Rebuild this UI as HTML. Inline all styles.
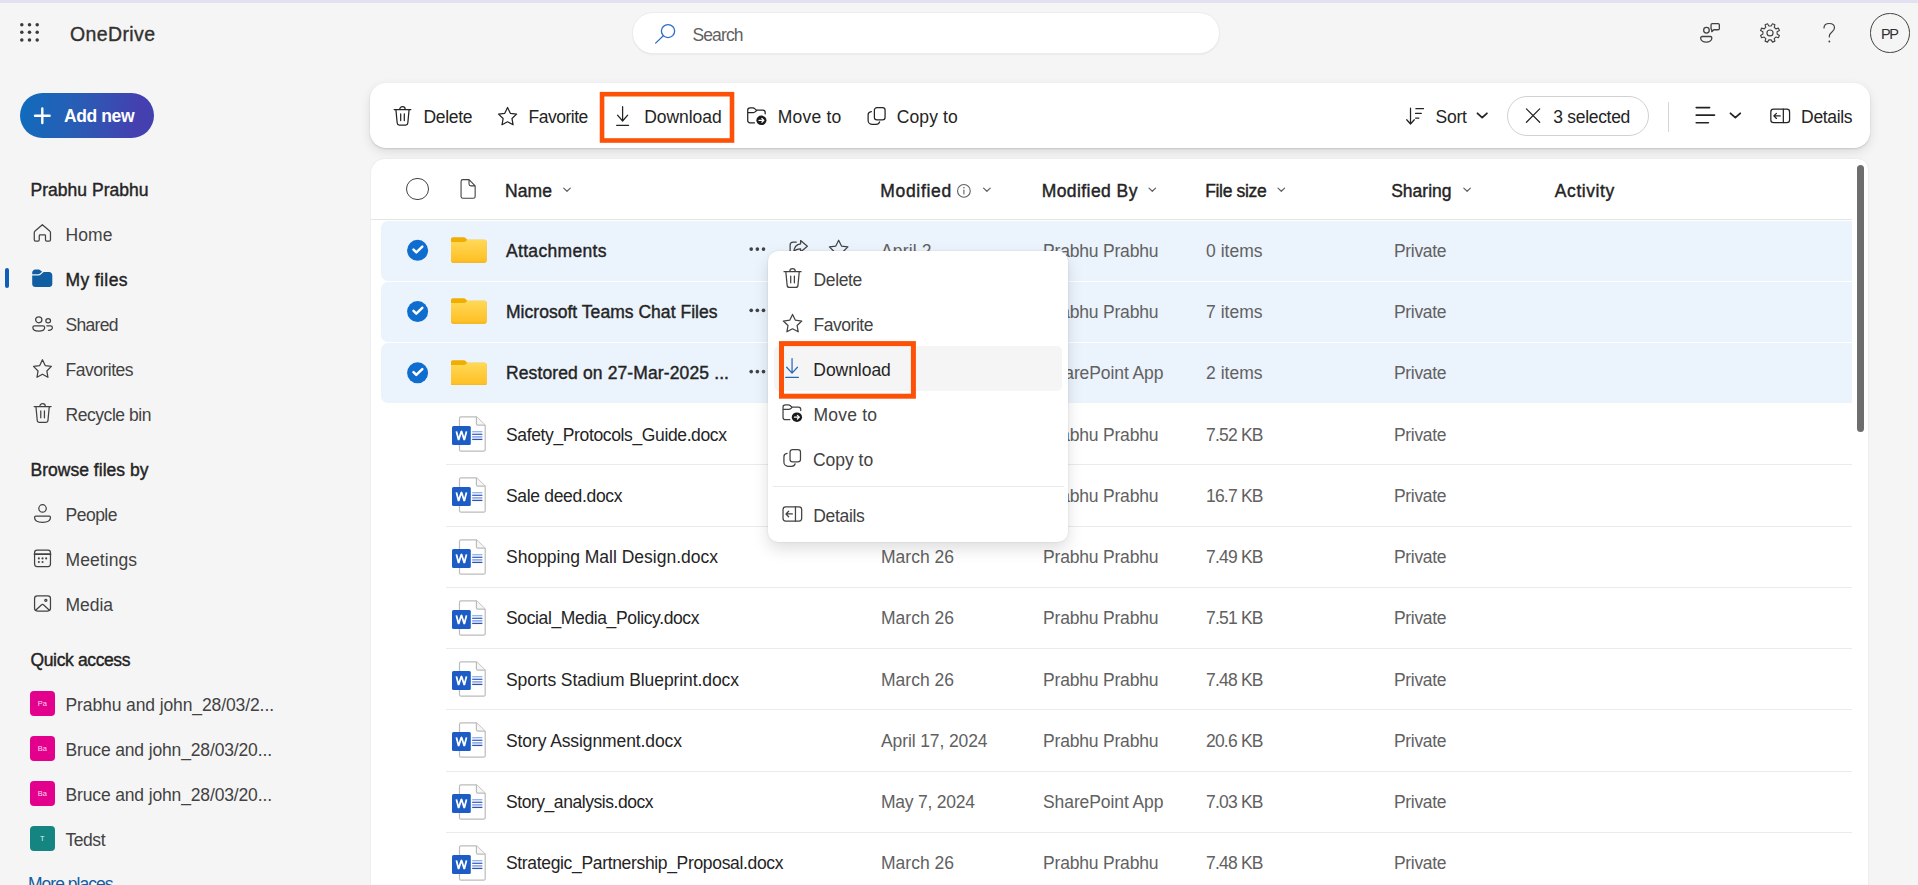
<!DOCTYPE html>
<html lang="en"><head><meta charset="utf-8"><title>My files - OneDrive</title><style>
html,body{margin:0;padding:0;}
body{width:1918px;height:885px;overflow:hidden;background:#f5f5f5;position:relative;font-family:"Liberation Sans", sans-serif;}
.t{position:absolute;white-space:nowrap;line-height:30px;height:30px;}
</style></head>
<body>
<div style="position:absolute;left:0px;top:0px;width:1918px;height:2.5px;background:#e3e1f1;"></div>
<svg style="position:absolute;left:19.8px;top:23.3px;" width="19" height="19" viewBox="0 0 19 19" fill="none"><circle cx="1.80" cy="1.80" r="1.750" fill="#3b3a39"/><circle cx="1.80" cy="9.35" r="1.750" fill="#3b3a39"/><circle cx="1.80" cy="16.90" r="1.750" fill="#3b3a39"/><circle cx="9.50" cy="1.80" r="1.750" fill="#3b3a39"/><circle cx="9.50" cy="9.35" r="1.750" fill="#3b3a39"/><circle cx="9.50" cy="16.90" r="1.750" fill="#3b3a39"/><circle cx="17.20" cy="1.80" r="1.750" fill="#3b3a39"/><circle cx="17.20" cy="9.35" r="1.750" fill="#3b3a39"/><circle cx="17.20" cy="16.90" r="1.750" fill="#3b3a39"/></svg>
<span class="t" id="t1" style="left:70px;top:18.50px;font-size:19.5px;color:#323130;-webkit-text-stroke:0.35px #323130;letter-spacing:0.375px;">OneDrive</span>
<div style="position:absolute;left:20px;top:93px;width:134px;height:45px;border-radius:23px;background:linear-gradient(100deg,#0f6cbd 0%,#2a5cb4 45%,#4440b0 85%,#4340ae 100%);"></div>
<svg style="position:absolute;left:0;top:0;overflow:visible" width="1" height="1"><g transform="translate(33.54 106.94) scale(0.9733 0.9733)"><path d="M9 1.500v15M1.500 9h15" stroke="#ffffff" stroke-width="2.4" vector-effect="non-scaling-stroke" fill="none" stroke-linecap="round" stroke-linejoin="round"/></g></svg>
<span class="t" id="t2" style="left:64px;top:101.00px;font-size:17.5px;color:#ffffff;font-weight:700;letter-spacing:-0.404px;">Add new</span>
<span class="t" id="t3" style="left:30.5px;top:174.50px;font-size:17.5px;color:#242424;-webkit-text-stroke:0.4px #242424;letter-spacing:0.022px;">Prabhu Prabhu</span>
<svg style="position:absolute;left:0;top:0;overflow:visible" width="1" height="1"><g transform="translate(29.91 220.64) scale(1.2462 1.2386)"><path d="M10 3.300 4.100 8.400c-.4.300-.6.800-.6 1.300v5.800c0 .6.400 1 1 1h2c.6 0 1-.4 1-1v-3.300c0-.4.300-.7.700-.7h3.600c.4 0 .7.300.7.700v3.300c0 .6.400 1 1 1h2c.6 0 1-.4 1-1V9.700c0-.5-.2-1-.6-1.300L10 3.300Z" stroke="#424242" stroke-width="1.25" vector-effect="non-scaling-stroke" fill="none" stroke-linecap="round" stroke-linejoin="round"/></g></svg>
<svg style="position:absolute;left:0;top:0;overflow:visible" width="1" height="1"><g transform="translate(29.69 265.87) scale(1.2562 1.2429)"><path d="M2 5.500C2 4.120 3.120 3 4.500 3h2.670c.46 0 .9.160 1.250.450L9.900 4.700 7.970 6.300a1.500 1.500 0 0 1-.960.350H2V5.500Zm0 2.150v6.850C2 15.880 3.120 17 4.500 17h11c1.380 0 2.500-1.120 2.500-2.500v-7C18 6.120 16.880 5 15.500 5h-4.390L8.600 7.070c-.45.370-1.010.580-1.600.580H2Z" fill="#115ea3"/></g></svg>
<svg style="position:absolute;left:0;top:0;overflow:visible" width="1" height="1"><g transform="translate(30.96 313.14) scale(1.1637 1.0802)"><circle cx="6.700" cy="6.200" r="2.700" stroke="#424242" stroke-width="1.25" vector-effect="non-scaling-stroke" fill="none" stroke-linecap="round" stroke-linejoin="round"/><path d="M1.600 13.300c0-.9.700-1.600 1.600-1.600h7c.9 0 1.600.7 1.600 1.600 0 2.100-2 3.300-5.100 3.300s-5.100-1.200-5.100-3.300Z" stroke="#424242" stroke-width="1.25" vector-effect="non-scaling-stroke" fill="none" stroke-linecap="round" stroke-linejoin="round"/><circle cx="14.800" cy="7.100" r="2" stroke="#424242" stroke-width="1.25" vector-effect="non-scaling-stroke" fill="none" stroke-linecap="round" stroke-linejoin="round"/><path d="M13.600 11.700h3.300c.9 0 1.500.7 1.500 1.500 0 1.600-1.200 2.600-3.400 2.700" stroke="#424242" stroke-width="1.25" vector-effect="non-scaling-stroke" fill="none" stroke-linecap="round" stroke-linejoin="round"/></g></svg>
<svg style="position:absolute;left:0;top:0;overflow:visible" width="1" height="1"><g transform="translate(30.55 356.92) scale(1.1900 1.2187)"><path d="M10 2.300l2.300 4.800 5.200.7-3.800 3.700.9 5.200L10 14.200l-4.600 2.500.9-5.200L2.500 7.800l5.200-.7L10 2.300Z" stroke="#424242" stroke-width="1.25" vector-effect="non-scaling-stroke" fill="none" stroke-linecap="round" stroke-linejoin="round"/></g></svg>
<svg style="position:absolute;left:0;top:0;overflow:visible" width="1" height="1"><g transform="translate(31.15 400.97) scale(1.1453 1.2161)"><path d="M2.600 4.600h14.800M7.600 4.400c0-1.300 1.100-2.300 2.400-2.300s2.400 1 2.400 2.300M4.200 4.800l1.100 11.100c.1 1 .9 1.700 1.900 1.700h5.600c1 0 1.800-.7 1.900-1.700l1.100-11.100M8.400 8.200v5.600M11.600 8.200v5.600" stroke="#424242" stroke-width="1.25" vector-effect="non-scaling-stroke" fill="none" stroke-linecap="round" stroke-linejoin="round"/></g></svg>
<svg style="position:absolute;left:0;top:0;overflow:visible" width="1" height="1"><g transform="translate(30.10 500.99) scale(1.2422 1.2447)"><circle cx="10" cy="6" r="3" stroke="#424242" stroke-width="1.25" vector-effect="non-scaling-stroke" fill="none" stroke-linecap="round" stroke-linejoin="round"/><path d="M3.600 13.250c0-.55.450-1 1-1h10.800c.55 0 1 .450 1 1 0 2.400-2.700 3.850-6.400 3.850s-6.400-1.450-6.400-3.850Z" stroke="#424242" stroke-width="1.25" vector-effect="non-scaling-stroke" fill="none" stroke-linecap="round" stroke-linejoin="round"/></g></svg>
<svg style="position:absolute;left:0;top:0;overflow:visible" width="1" height="1"><g transform="translate(30.29 545.82) scale(1.2231 1.2577)"><rect x="3.500" y="3.500" width="13" height="13" rx="2" stroke="#424242" stroke-width="1.25" vector-effect="non-scaling-stroke" fill="none" stroke-linecap="round" stroke-linejoin="round"/><path d="M3.500 6.700h13" stroke="#424242" stroke-width="1.75" vector-effect="non-scaling-stroke" fill="none" stroke-linecap="round" stroke-linejoin="round"/><circle cx="7" cy="10" r=".85" fill="#424242"/><circle cx="10" cy="10" r=".85" fill="#424242"/><circle cx="13" cy="10" r=".85" fill="#424242"/><circle cx="7" cy="12.900" r=".85" fill="#424242"/><circle cx="10" cy="12.900" r=".85" fill="#424242"/></g></svg>
<svg style="position:absolute;left:0;top:0;overflow:visible" width="1" height="1"><g transform="translate(30.29 591.66) scale(1.2231 1.1769)"><rect x="3.500" y="3.500" width="13" height="13" rx="2.300" stroke="#424242" stroke-width="1.25" vector-effect="non-scaling-stroke" fill="none" stroke-linecap="round" stroke-linejoin="round"/><circle cx="12.700" cy="7.400" r=".9" stroke="#424242" stroke-width="1.25" vector-effect="non-scaling-stroke" fill="none" stroke-linecap="round" stroke-linejoin="round"/><path d="M4.400 15.800l4.600-4.500c.6-.55 1.400-.55 2 0l4.600 4.500" stroke="#424242" stroke-width="1.25" vector-effect="non-scaling-stroke" fill="none" stroke-linecap="round" stroke-linejoin="round"/></g></svg>
<span class="t" id="t4" style="left:65.5px;top:219.50px;font-size:17.5px;color:#424242;letter-spacing:0.104px;">Home</span>
<span class="t" id="t5" style="left:65.5px;top:264.50px;font-size:17.5px;color:#242424;-webkit-text-stroke:0.4px #242424;letter-spacing:0.384px;">My files</span>
<span class="t" id="t6" style="left:65.5px;top:309.50px;font-size:17.5px;color:#424242;letter-spacing:-0.688px;">Shared</span>
<span class="t" id="t7" style="left:65.5px;top:354.50px;font-size:17.5px;color:#424242;letter-spacing:-0.496px;">Favorites</span>
<span class="t" id="t8" style="left:65.5px;top:399.50px;font-size:17.5px;color:#424242;letter-spacing:-0.447px;">Recycle bin</span>
<span class="t" id="t9" style="left:65.5px;top:500.00px;font-size:17.5px;color:#424242;letter-spacing:-0.500px;">People</span>
<span class="t" id="t10" style="left:65.5px;top:545.00px;font-size:17.5px;color:#424242;letter-spacing:0.069px;">Meetings</span>
<span class="t" id="t11" style="left:65.5px;top:589.50px;font-size:17.5px;color:#424242;letter-spacing:-0.043px;">Media</span>
<div style="position:absolute;left:5px;top:268px;width:4px;height:20px;background:#0f5fb8;border-radius:2px;"></div>
<span class="t" id="t12" style="left:30.5px;top:455.00px;font-size:17.5px;color:#242424;-webkit-text-stroke:0.4px #242424;letter-spacing:0.022px;">Browse files by</span>
<span class="t" id="t13" style="left:30.5px;top:644.50px;font-size:17.5px;color:#242424;-webkit-text-stroke:0.4px #242424;letter-spacing:-0.369px;">Quick access</span>
<div style="position:absolute;left:30px;top:691.0px;width:24.5px;height:24.5px;background:#e3008c;border-radius:4px;"></div>
<span class="t" id="t14" style="left:30px;top:689.20px;font-size:7.5px;color:#ffd6ee;width:24.5px;text-align:center;">Pa</span>
<span class="t" id="t15" style="left:65.5px;top:689.50px;font-size:17.5px;color:#424242;letter-spacing:-0.106px;">Prabhu and john_28/03/2...</span>
<div style="position:absolute;left:30px;top:736.0px;width:24.5px;height:24.5px;background:#e3008c;border-radius:4px;"></div>
<span class="t" id="t16" style="left:30px;top:734.20px;font-size:7.5px;color:#ffd6ee;width:24.5px;text-align:center;">Ba</span>
<span class="t" id="t17" style="left:65.5px;top:734.50px;font-size:17.5px;color:#424242;letter-spacing:-0.147px;">Bruce and john_28/03/20...</span>
<div style="position:absolute;left:30px;top:781.0px;width:24.5px;height:24.5px;background:#e3008c;border-radius:4px;"></div>
<span class="t" id="t18" style="left:30px;top:779.20px;font-size:7.5px;color:#ffd6ee;width:24.5px;text-align:center;">Ba</span>
<span class="t" id="t19" style="left:65.5px;top:779.50px;font-size:17.5px;color:#424242;letter-spacing:-0.147px;">Bruce and john_28/03/20...</span>
<div style="position:absolute;left:30px;top:826.0px;width:24.5px;height:24.5px;background:#158582;border-radius:4px;"></div>
<span class="t" id="t20" style="left:30px;top:824.20px;font-size:7.5px;color:#d9f2f0;width:24.5px;text-align:center;">T</span>
<span class="t" id="t21" style="left:65.5px;top:824.50px;font-size:17.5px;color:#424242;letter-spacing:-0.457px;">Tedst</span>
<span class="t" id="t22" style="left:28px;top:868.60px;font-size:17.5px;color:#115ea3;letter-spacing:-0.993px;">More places...</span>
<div style="position:absolute;left:633px;top:13px;width:585.500px;height:40px;border-radius:21px;background:#fff;box-shadow:0 0 0 1px #ececec,0 1px 2px rgba(0,0,0,.14);"></div>
<svg style="position:absolute;left:0;top:0;overflow:visible" width="1" height="1"><g transform="translate(653.73 22.16) scale(1.0674 1.0393)"><circle cx="13.400" cy="8.600" r="6.200" stroke="#2d6bc6" stroke-width="1.3" vector-effect="non-scaling-stroke" fill="none" stroke-linecap="round" stroke-linejoin="round"/><path d="M9 13 1.800 20.200" stroke="#2d6bc6" stroke-width="1.3" vector-effect="non-scaling-stroke" fill="none" stroke-linecap="round" stroke-linejoin="round"/></g></svg>
<span class="t" id="t23" style="left:692.5px;top:19.50px;font-size:17.5px;color:#616161;letter-spacing:-0.891px;">Search</span>
<svg style="position:absolute;left:0;top:0;overflow:visible" width="1" height="1"><g transform="translate(1699.15 21.85) scale(1.0000 1.0027)"><circle cx="7.300" cy="8.350" r="2.800" stroke="#424242" stroke-width="1.3" vector-effect="non-scaling-stroke" fill="none" stroke-linecap="round" stroke-linejoin="round"/><path d="M1.500 16.100c0-.8.700-1.500 1.500-1.500h8.200c.8 0 1.500.7 1.500 1.500 0 2.400-2.500 4.050-5.600 4.050s-5.600-1.650-5.600-4.050Z" stroke="#424242" stroke-width="1.3" vector-effect="non-scaling-stroke" fill="none" stroke-linecap="round" stroke-linejoin="round"/><path d="M13.100 1.700h5.900c.7 0 1.200.5 1.200 1.200v3.800c0 .7-.5 1.200-1.200 1.200h-4.300l-2.100 1.900V7.800c-.4-.2-.7-.6-.7-1.100V2.900c0-.7.500-1.200 1.200-1.200Z" stroke="#424242" stroke-width="1.3" vector-effect="non-scaling-stroke" fill="none" stroke-linecap="round" stroke-linejoin="round"/></g></svg>
<svg style="position:absolute;left:0;top:0;overflow:visible" width="1" height="1"><g transform="translate(1759.17 22.40) scale(0.9848 0.9587)"><path d="M18.21 12.14 L20.57 13.54 L19.56 15.97 L16.91 15.29 L15.29 16.91 L15.97 19.56 L13.54 20.57 L12.14 18.21 L9.86 18.21 L8.46 20.57 L6.03 19.56 L6.71 16.91 L5.09 15.29 L2.44 15.97 L1.43 13.54 L3.79 12.14 L3.79 9.86 L1.43 8.46 L2.44 6.03 L5.09 6.71 L6.71 5.09 L6.03 2.44 L8.46 1.43 L9.86 3.79 L12.14 3.79 L13.54 1.43 L15.97 2.44 L15.29 5.09 L16.91 6.71 L19.56 6.03 L20.57 8.46 L18.21 9.86Z" stroke="#424242" stroke-width="1.15" vector-effect="non-scaling-stroke" fill="none" stroke-linecap="round" stroke-linejoin="round"/><circle cx="11" cy="11" r="3.100" stroke="#424242" stroke-width="1.15" vector-effect="non-scaling-stroke" fill="none" stroke-linecap="round" stroke-linejoin="round"/></g></svg>
<svg style="position:absolute;left:0;top:0;overflow:visible" width="1" height="1"><g transform="translate(1819.26 21.60) scale(1.0294 1.0000)"><path d="M4.600 6.400c0-2.700 2.100-4.500 5.100-4.500s5.100 1.800 5.100 4.300c0 2.200-1.300 3.300-2.700 4.400-1.400 1.100-2.300 2-2.300 3.900v.8" stroke="#424242" stroke-width="1.2" vector-effect="non-scaling-stroke" fill="none" stroke-linecap="round" stroke-linejoin="round"/><circle cx="9.800" cy="19.900" r=".9" fill="#424242"/></g></svg>
<div style="position:absolute;left:1870.300px;top:13.200px;width:37.400px;height:37.400px;border-radius:50%;border:1.200px solid #424242;"></div>
<span class="t" id="t24" style="left:1881px;top:18.50px;font-size:14.5px;color:#323130;letter-spacing:-1.344px;">PP</span>
<div style="position:absolute;left:370px;top:82.500px;width:1500px;height:65px;border-radius:16px;background:#fff;box-shadow:0 1px 2px rgba(0,0,0,.13),0 4px 11px rgba(0,0,0,.10);"></div>
<svg style="position:absolute;left:0;top:0;overflow:visible" width="1" height="1"><g transform="translate(391.18 104.13) scale(1.1318 1.1903)"><path d="M2.600 4.600h14.800M7.600 4.400c0-1.300 1.100-2.300 2.400-2.300s2.400 1 2.400 2.300M4.200 4.800l1.100 11.100c.1 1 .9 1.700 1.900 1.700h5.600c1 0 1.800-.7 1.900-1.700l1.100-11.100M8.400 8.200v5.600M11.600 8.200v5.600" stroke="#242424" stroke-width="1.25" vector-effect="non-scaling-stroke" fill="none" stroke-linecap="round" stroke-linejoin="round"/></g></svg>
<span class="t" id="t25" style="left:423.5px;top:101.50px;font-size:17.5px;color:#242424;letter-spacing:-0.319px;">Delete</span>
<svg style="position:absolute;left:0;top:0;overflow:visible" width="1" height="1"><g transform="translate(495.52 104.77) scale(1.2033 1.1979)"><path d="M10 2.300l2.300 4.800 5.200.7-3.800 3.700.9 5.200L10 14.200l-4.600 2.500.9-5.200L2.500 7.800l5.200-.7L10 2.300Z" stroke="#242424" stroke-width="1.25" vector-effect="non-scaling-stroke" fill="none" stroke-linecap="round" stroke-linejoin="round"/></g></svg>
<span class="t" id="t26" style="left:528.5px;top:101.50px;font-size:17.5px;color:#242424;letter-spacing:-0.488px;">Favorite</span>
<svg style="position:absolute;left:0;top:0;overflow:visible" width="1" height="1"><g transform="translate(611.54 103.35) scale(1.1065 1.2601)"><path d="M10 2.600v11.200M5.400 9.400l4.600 4.600 4.600-4.600M4.600 17.400h10.800" stroke="#242424" stroke-width="1.25" vector-effect="non-scaling-stroke" fill="none" stroke-linecap="round" stroke-linejoin="round"/></g></svg>
<span class="t" id="t27" style="left:644.3px;top:101.50px;font-size:17.5px;color:#242424;letter-spacing:-0.061px;">Download</span>
<svg style="position:absolute;left:0;top:0;overflow:visible" width="1" height="1"><g transform="translate(744.66 104.63) scale(1.1792 1.0994)"><path d="M8.300 16.500H4.600c-1.100 0-2-.9-2-2V5c0-1.100.9-2 2-2h2.500c.5 0 1 .2 1.400.6l1.400 1.400h5.500c1.100 0 2 .9 2 2v1.300M2.600 7.200h4.900c.5 0 1-.2 1.400-.6l1.300-1.300" stroke="#242424" stroke-width="1.25" vector-effect="non-scaling-stroke" fill="none" stroke-linecap="round" stroke-linejoin="round"/><circle cx="14.200" cy="14.300" r="4.300" fill="#1b1b1b"/><path d="M12.100 14.300h4M14.600 12.600l1.700 1.700-1.700 1.700" stroke="#fff" stroke-width="1.200" vector-effect="non-scaling-stroke" fill="none" stroke-linecap="round" stroke-linejoin="round"/></g></svg>
<span class="t" id="t28" style="left:777.8px;top:101.50px;font-size:17.5px;color:#242424;letter-spacing:0.192px;">Move to</span>
<svg style="position:absolute;left:0;top:0;overflow:visible" width="1" height="1"><g transform="translate(863.56 104.75) scale(1.3038 1.1893)"><rect x="8.300" y="2.500" width="8.200" height="10.200" rx="2" stroke="#242424" stroke-width="1.25" vector-effect="non-scaling-stroke" fill="none" stroke-linecap="round" stroke-linejoin="round"/><path d="M6 5.700c-1.400.2-2.500 1.100-2.500 2.700v4.800c0 1.900 1.500 3.300 3.300 3.300h2.800c1.500 0 2.400-.9 2.700-2.100" stroke="#242424" stroke-width="1.25" vector-effect="non-scaling-stroke" fill="none" stroke-linecap="round" stroke-linejoin="round"/></g></svg>
<span class="t" id="t29" style="left:896.8px;top:101.50px;font-size:17.5px;color:#242424;letter-spacing:0.098px;">Copy to</span>
<svg style="position:absolute;left:0;top:0;overflow:visible" width="1" height="1"><g transform="translate(1404.20 104.44) scale(1.1473 1.1842)"><path d="M5.500 3.200v13.300M2.200 12.900l3.300 3.600 3.300-3.600M10.200 3.600h6.600M9.900 7.600h5M9.900 11.500h2.900" stroke="#242424" stroke-width="1.25" vector-effect="non-scaling-stroke" fill="none" stroke-linecap="round" stroke-linejoin="round"/></g></svg>
<span class="t" id="t30" style="left:1435.6px;top:101.50px;font-size:17.5px;color:#242424;letter-spacing:-0.236px;">Sort</span>
<svg style="position:absolute;left:0;top:0;overflow:visible" width="1" height="1"><g transform="translate(1475.93 110.91) scale(1.0444 0.9556)"><path d="M1.500 2.500 6 7l4.500-4.500" stroke="#242424" stroke-width="1.8" vector-effect="non-scaling-stroke" fill="none" stroke-linecap="round" stroke-linejoin="round"/></g></svg>
<div style="position:absolute;left:1507.100px;top:96.100px;width:139.600px;height:37.700px;border-radius:20px;border:1.200px solid #d1d1d1;background:#fff;"></div>
<svg style="position:absolute;left:0;top:0;overflow:visible" width="1" height="1"><g transform="translate(1523.59 106.06) scale(0.9464 0.9536)"><path d="M3 3l14 14M17 3 3 17" stroke="#242424" stroke-width="1.25" vector-effect="non-scaling-stroke" fill="none" stroke-linecap="round" stroke-linejoin="round"/></g></svg>
<span class="t" id="t31" style="left:1553.3px;top:101.50px;font-size:17.5px;color:#242424;letter-spacing:-0.309px;">3 selected</span>
<div style="position:absolute;left:1668px;top:102px;width:1.2px;height:30px;background:#d6d6d6;"></div>
<svg style="position:absolute;left:0;top:0;overflow:visible" width="1" height="1"><g transform="translate(1693.15 103.17) scale(1.2200 1.1984)"><path d="M2.500 3.700h11M2.500 10h15M2.500 16.300h10" stroke="#242424" stroke-width="1.6" vector-effect="non-scaling-stroke" fill="none" stroke-linecap="round" stroke-linejoin="round"/></g></svg>
<svg style="position:absolute;left:0;top:0;overflow:visible" width="1" height="1"><g transform="translate(1728.88 110.91) scale(1.0778 0.9556)"><path d="M1.500 2.500 6 7l4.500-4.500" stroke="#242424" stroke-width="1.8" vector-effect="non-scaling-stroke" fill="none" stroke-linecap="round" stroke-linejoin="round"/></g></svg>
<svg style="position:absolute;left:0;top:0;overflow:visible" width="1" height="1"><g transform="translate(1767.70 103.76) scale(1.2500 1.2136)"><rect x="2.500" y="4.500" width="15" height="11" rx="2.200" stroke="#242424" stroke-width="1.25" vector-effect="non-scaling-stroke" fill="none" stroke-linecap="round" stroke-linejoin="round"/><path d="M12.500 4.500v11M10 10H5M7 7.900 4.900 10 7 12.100" stroke="#242424" stroke-width="1.25" vector-effect="non-scaling-stroke" fill="none" stroke-linecap="round" stroke-linejoin="round"/></g></svg>
<span class="t" id="t32" style="left:1801.1px;top:101.50px;font-size:17.5px;color:#242424;letter-spacing:-0.350px;">Details</span>
<svg style="position:absolute;left:0;top:0;overflow:visible" width="1" height="1"><rect x="602.05" y="94.20" width="129.95" height="46.30" fill="none" stroke="#fd5108" stroke-width="4.6"/></svg>
<div style="position:absolute;left:371px;top:159px;width:1497px;height:740px;border-radius:14px 10px 0 0;background:#fff;box-shadow:0 0 2px rgba(0,0,0,.10);"></div>
<div style="position:absolute;left:406.100px;top:177.700px;width:20.600px;height:20.600px;border-radius:50%;border:1.200px solid #424242;background:#fff;"></div>
<svg style="position:absolute;left:0;top:0;overflow:visible" width="1" height="1"><g transform="translate(456.15 176.55) scale(1.2261 1.2400)"><path d="M5.500 2.500h5l5 5v8.500c0 .8-.7 1.500-1.500 1.500h-8.500c-.8 0-1.500-.7-1.500-1.500v-12c0-.8.700-1.500 1.500-1.500ZM10.500 2.700v3.300c0 .8.700 1.500 1.500 1.500h3.300" stroke="#424242" stroke-width="1.1" vector-effect="non-scaling-stroke" fill="none" stroke-linecap="round" stroke-linejoin="round"/></g></svg>
<span class="t" id="t33" style="left:505px;top:175.50px;font-size:17.5px;color:#242424;-webkit-text-stroke:0.4px #242424;letter-spacing:0.104px;">Name</span>
<svg style="position:absolute;left:0;top:0;overflow:visible" width="1" height="1"><g transform="translate(562.60 186.32) scale(0.7333 0.7111)"><path d="M1.500 2.500 6 7l4.500-4.500" stroke="#616161" stroke-width="1.2" vector-effect="non-scaling-stroke" fill="none" stroke-linecap="round" stroke-linejoin="round"/></g></svg>
<span class="t" id="t34" style="left:880.3px;top:175.50px;font-size:17.5px;color:#242424;-webkit-text-stroke:0.4px #242424;letter-spacing:0.678px;">Modified</span>
<svg style="position:absolute;left:0;top:0;overflow:visible" width="1" height="1"><g transform="translate(956.49 183.49) scale(1.0583 1.0583)"><circle cx="7" cy="7" r="6" stroke="#616161" stroke-width="1.1" vector-effect="non-scaling-stroke" fill="none" stroke-linecap="round" stroke-linejoin="round"/><path d="M7 6.300v3.700" stroke="#616161" stroke-width="1.1" vector-effect="non-scaling-stroke" fill="none" stroke-linecap="round" stroke-linejoin="round"/><circle cx="7" cy="4.100" r=".75" fill="#616161"/></g></svg>
<svg style="position:absolute;left:0;top:0;overflow:visible" width="1" height="1"><g transform="translate(982.50 186.32) scale(0.7333 0.7111)"><path d="M1.500 2.500 6 7l4.500-4.500" stroke="#616161" stroke-width="1.2" vector-effect="non-scaling-stroke" fill="none" stroke-linecap="round" stroke-linejoin="round"/></g></svg>
<span class="t" id="t35" style="left:1041.7px;top:175.50px;font-size:17.5px;color:#242424;-webkit-text-stroke:0.4px #242424;letter-spacing:0.426px;">Modified By</span>
<svg style="position:absolute;left:0;top:0;overflow:visible" width="1" height="1"><g transform="translate(1147.90 186.32) scale(0.7333 0.7111)"><path d="M1.500 2.500 6 7l4.500-4.500" stroke="#616161" stroke-width="1.2" vector-effect="non-scaling-stroke" fill="none" stroke-linecap="round" stroke-linejoin="round"/></g></svg>
<span class="t" id="t36" style="left:1205.2px;top:175.50px;font-size:17.5px;color:#242424;-webkit-text-stroke:0.4px #242424;letter-spacing:-0.336px;">File size</span>
<svg style="position:absolute;left:0;top:0;overflow:visible" width="1" height="1"><g transform="translate(1276.90 186.32) scale(0.7333 0.7111)"><path d="M1.500 2.500 6 7l4.500-4.500" stroke="#616161" stroke-width="1.2" vector-effect="non-scaling-stroke" fill="none" stroke-linecap="round" stroke-linejoin="round"/></g></svg>
<span class="t" id="t37" style="left:1391.2px;top:175.50px;font-size:17.5px;color:#242424;-webkit-text-stroke:0.4px #242424;letter-spacing:-0.005px;">Sharing</span>
<svg style="position:absolute;left:0;top:0;overflow:visible" width="1" height="1"><g transform="translate(1462.70 186.32) scale(0.7333 0.7111)"><path d="M1.500 2.500 6 7l4.500-4.500" stroke="#616161" stroke-width="1.2" vector-effect="non-scaling-stroke" fill="none" stroke-linecap="round" stroke-linejoin="round"/></g></svg>
<span class="t" id="t38" style="left:1554.8px;top:175.50px;font-size:17.5px;color:#242424;-webkit-text-stroke:0.4px #242424;letter-spacing:0.580px;">Activity</span>
<div style="position:absolute;left:371px;top:219px;width:1481px;height:1.2px;background:#e4e4e4;"></div>
<div style="position:absolute;left:1857px;top:164.5px;width:7px;height:267px;background:#6e6e6e;border-radius:4px;"></div>
<svg width="0" height="0" style="position:absolute"><defs><linearGradient id="fg" x1="0" y1="0" x2="0" y2="1"><stop offset="0" stop-color="#ffd957"/><stop offset="1" stop-color="#ffbe22"/></linearGradient></defs></svg>
<div style="position:absolute;left:381.3px;top:220.75px;width:1470.7px;height:60px;background:#ebf3fc;border-radius:7px 0 0 7px;"></div>
<svg style="position:absolute;left:0;top:0;overflow:visible" width="1" height="1"><g transform="translate(406.60 239.30) scale(1.0000 1.0000)"><circle cx="11" cy="11" r="10.500" fill="#0f6dcf"/><path d="M6.900 10.300 9.700 13.100 15.700 7.300" stroke="#fff" stroke-width="2.500" vector-effect="non-scaling-stroke" fill="none" stroke-linecap="round" stroke-linejoin="round"/></g></svg>
<svg style="position:absolute;left:451.3px;top:237.10000000000002px;" width="35.6" height="25.6" viewBox="0 0 36 25.6" fill="none"><path d="M0 1.800C0 .8.800 0 1.800 0h11.400c.5 0 .9.200 1.200.5l2.100 2.200H34c1.100 0 2 .9 2 2v18.900c0 1.100-.9 2-2 2H2c-1.100 0-2-.9-2-2V1.800Z" fill="#f0af00"/><path d="M0 4.800h13.300c.5 0 1-.2 1.400-.5l1.900-1.600H34c1.100 0 2 .9 2 2v18.900c0 1.100-.9 2-2 2H2c-1.100 0-2-.9-2-2V4.800Z" fill="url(#fg)"/><path d="M.3 24.300c.3.800 1 1.300 1.800 1.300h31.800c.8 0 1.500-.5 1.800-1.300-.4.300-.9.500-1.400.5H1.700c-.5 0-1-.2-1.400-.5Z" fill="#e4a000" opacity=".7"/></svg>
<span class="t" id="t39" style="left:506px;top:235.94px;font-size:17.5px;color:#242424;-webkit-text-stroke:0.4px #242424;letter-spacing:0.322px;">Attachments</span>
<svg style="position:absolute;left:0;top:0;overflow:visible" width="1" height="1"><g transform="translate(749.20 246.99) scale(1.0063 1.0556)"><circle cx="2" cy="2" r="1.800" fill="#424242"/><circle cx="8.100" cy="2" r="1.800" fill="#424242"/><circle cx="14.200" cy="2" r="1.800" fill="#424242"/></g></svg>
<span class="t" id="t40" style="left:881px;top:235.94px;font-size:17.5px;color:#616161;letter-spacing:0.148px;">April 2</span>
<span class="t" id="t41" style="left:1043px;top:235.94px;font-size:17.5px;color:#616161;letter-spacing:-0.186px;">Prabhu Prabhu</span>
<span class="t" id="t42" style="left:1206px;top:235.94px;font-size:17.5px;color:#616161;letter-spacing:0.016px;">0 items</span>
<span class="t" id="t43" style="left:1394px;top:235.94px;font-size:17.5px;color:#616161;letter-spacing:-0.328px;">Private</span>
<div style="position:absolute;left:381.3px;top:282.0px;width:1470.7px;height:60px;background:#ebf3fc;border-radius:7px 0 0 7px;"></div>
<svg style="position:absolute;left:0;top:0;overflow:visible" width="1" height="1"><g transform="translate(406.60 300.55) scale(1.0000 1.0000)"><circle cx="11" cy="11" r="10.500" fill="#0f6dcf"/><path d="M6.900 10.300 9.700 13.100 15.700 7.300" stroke="#fff" stroke-width="2.500" vector-effect="non-scaling-stroke" fill="none" stroke-linecap="round" stroke-linejoin="round"/></g></svg>
<svg style="position:absolute;left:451.3px;top:298.35px;" width="35.6" height="25.6" viewBox="0 0 36 25.6" fill="none"><path d="M0 1.800C0 .8.800 0 1.800 0h11.400c.5 0 .9.200 1.200.5l2.100 2.200H34c1.100 0 2 .9 2 2v18.900c0 1.100-.9 2-2 2H2c-1.100 0-2-.9-2-2V1.800Z" fill="#f0af00"/><path d="M0 4.800h13.300c.5 0 1-.2 1.400-.5l1.900-1.600H34c1.100 0 2 .9 2 2v18.900c0 1.100-.9 2-2 2H2c-1.100 0-2-.9-2-2V4.800Z" fill="url(#fg)"/><path d="M.3 24.300c.3.800 1 1.300 1.800 1.300h31.800c.8 0 1.500-.5 1.800-1.300-.4.300-.9.500-1.400.5H1.700c-.5 0-1-.2-1.400-.5Z" fill="#e4a000" opacity=".7"/></svg>
<span class="t" id="t44" style="left:506px;top:296.94px;font-size:17.5px;color:#242424;-webkit-text-stroke:0.4px #242424;letter-spacing:0.031px;">Microsoft Teams Chat Files</span>
<svg style="position:absolute;left:0;top:0;overflow:visible" width="1" height="1"><g transform="translate(749.20 308.24) scale(1.0063 1.0556)"><circle cx="2" cy="2" r="1.800" fill="#424242"/><circle cx="8.100" cy="2" r="1.800" fill="#424242"/><circle cx="14.200" cy="2" r="1.800" fill="#424242"/></g></svg>
<span class="t" id="t45" style="left:881px;top:296.94px;font-size:17.5px;color:#616161;letter-spacing:0.007px;">March 26</span>
<span class="t" id="t46" style="left:1043px;top:296.94px;font-size:17.5px;color:#616161;letter-spacing:-0.186px;">Prabhu Prabhu</span>
<span class="t" id="t47" style="left:1206px;top:296.94px;font-size:17.5px;color:#616161;letter-spacing:0.016px;">7 items</span>
<span class="t" id="t48" style="left:1394px;top:296.94px;font-size:17.5px;color:#616161;letter-spacing:-0.328px;">Private</span>
<div style="position:absolute;left:381.3px;top:343.25px;width:1470.7px;height:60px;background:#ebf3fc;border-radius:7px 0 0 7px;"></div>
<svg style="position:absolute;left:0;top:0;overflow:visible" width="1" height="1"><g transform="translate(406.60 361.80) scale(1.0000 1.0000)"><circle cx="11" cy="11" r="10.500" fill="#0f6dcf"/><path d="M6.900 10.300 9.700 13.100 15.700 7.300" stroke="#fff" stroke-width="2.500" vector-effect="non-scaling-stroke" fill="none" stroke-linecap="round" stroke-linejoin="round"/></g></svg>
<svg style="position:absolute;left:451.3px;top:359.6px;" width="35.6" height="25.6" viewBox="0 0 36 25.6" fill="none"><path d="M0 1.800C0 .8.800 0 1.800 0h11.400c.5 0 .9.200 1.200.5l2.100 2.200H34c1.100 0 2 .9 2 2v18.900c0 1.100-.9 2-2 2H2c-1.100 0-2-.9-2-2V1.800Z" fill="#f0af00"/><path d="M0 4.800h13.300c.5 0 1-.2 1.400-.5l1.900-1.600H34c1.100 0 2 .9 2 2v18.900c0 1.100-.9 2-2 2H2c-1.100 0-2-.9-2-2V4.800Z" fill="url(#fg)"/><path d="M.3 24.300c.3.800 1 1.300 1.800 1.300h31.800c.8 0 1.500-.5 1.800-1.300-.4.300-.9.500-1.400.5H1.700c-.5 0-1-.2-1.400-.5Z" fill="#e4a000" opacity=".7"/></svg>
<span class="t" id="t49" style="left:506px;top:357.94px;font-size:17.5px;color:#242424;-webkit-text-stroke:0.4px #242424;letter-spacing:0.121px;">Restored on 27-Mar-2025 ...</span>
<svg style="position:absolute;left:0;top:0;overflow:visible" width="1" height="1"><g transform="translate(749.20 369.49) scale(1.0063 1.0556)"><circle cx="2" cy="2" r="1.800" fill="#424242"/><circle cx="8.100" cy="2" r="1.800" fill="#424242"/><circle cx="14.200" cy="2" r="1.800" fill="#424242"/></g></svg>
<span class="t" id="t50" style="left:881px;top:357.94px;font-size:17.5px;color:#616161;letter-spacing:0.007px;">March 27</span>
<span class="t" id="t51" style="left:1043px;top:357.94px;font-size:17.5px;color:#616161;letter-spacing:-0.087px;">SharePoint App</span>
<span class="t" id="t52" style="left:1206px;top:357.94px;font-size:17.5px;color:#616161;letter-spacing:0.016px;">2 items</span>
<span class="t" id="t53" style="left:1394px;top:357.94px;font-size:17.5px;color:#616161;letter-spacing:-0.328px;">Private</span>
<svg style="position:absolute;left:452px;top:416.05px;" width="34" height="36" viewBox="0 0 34 36" fill="none"><path d="M9 .800h15.400l8.800 8.400v24.500c0 .8-.7 1.500-1.500 1.500H9c-.8 0-1.500-.7-1.500-1.500V2.300c0-.8.700-1.500 1.500-1.500Z" fill="#fff" stroke="#bcbcbc" stroke-width="1.200"/><path d="M24.400 1v6.500c0 .9.700 1.600 1.600 1.600h7" fill="#f6f6f6" stroke="#bcbcbc" stroke-width="1.200" stroke-linejoin="round"/><rect x="0" y="10" width="18.800" height="19" rx="1.500" fill="#1c5cc4"/><path d="M4.400 15.400l2.200 8.600 2.700-8.600h.3l2.700 8.600 2.200-8.600" stroke="#fff" stroke-width="1.800" fill="none" stroke-linejoin="bevel"/><path d="M20.200 15.700h10.200" stroke="#8db3f0" stroke-width="1.300"/><path d="M20.200 18.300h10.200" stroke="#3f63c4" stroke-width="1.300"/><path d="M20.200 20.900h10.200" stroke="#6e92e2" stroke-width="1.300"/><path d="M20.200 23.400h10.200" stroke="#2e52b2" stroke-width="1.300"/></svg>
<span class="t" id="t54" style="left:506px;top:419.94px;font-size:17.5px;color:#242424;letter-spacing:-0.368px;">Safety_Protocols_Guide.docx</span>
<div style="position:absolute;left:446px;top:464px;width:1406px;height:1px;background:#ebebeb;"></div>
<span class="t" id="t55" style="left:881px;top:419.94px;font-size:17.5px;color:#616161;letter-spacing:0.007px;">March 26</span>
<span class="t" id="t56" style="left:1043px;top:419.94px;font-size:17.5px;color:#616161;letter-spacing:-0.186px;">Prabhu Prabhu</span>
<span class="t" id="t57" style="left:1206px;top:419.94px;font-size:17.5px;color:#616161;letter-spacing:-0.797px;">7.52 KB</span>
<span class="t" id="t58" style="left:1394px;top:419.94px;font-size:17.5px;color:#616161;letter-spacing:-0.328px;">Private</span>
<svg style="position:absolute;left:452px;top:477.3px;" width="34" height="36" viewBox="0 0 34 36" fill="none"><path d="M9 .800h15.400l8.800 8.400v24.500c0 .8-.7 1.500-1.500 1.500H9c-.8 0-1.500-.7-1.500-1.500V2.300c0-.8.700-1.500 1.500-1.500Z" fill="#fff" stroke="#bcbcbc" stroke-width="1.200"/><path d="M24.400 1v6.500c0 .9.700 1.600 1.600 1.600h7" fill="#f6f6f6" stroke="#bcbcbc" stroke-width="1.200" stroke-linejoin="round"/><rect x="0" y="10" width="18.800" height="19" rx="1.500" fill="#1c5cc4"/><path d="M4.400 15.400l2.200 8.600 2.700-8.600h.3l2.700 8.600 2.200-8.600" stroke="#fff" stroke-width="1.800" fill="none" stroke-linejoin="bevel"/><path d="M20.200 15.700h10.200" stroke="#8db3f0" stroke-width="1.300"/><path d="M20.200 18.300h10.200" stroke="#3f63c4" stroke-width="1.300"/><path d="M20.200 20.900h10.200" stroke="#6e92e2" stroke-width="1.300"/><path d="M20.200 23.400h10.200" stroke="#2e52b2" stroke-width="1.300"/></svg>
<span class="t" id="t59" style="left:506px;top:480.94px;font-size:17.5px;color:#242424;letter-spacing:-0.320px;">Sale deed.docx</span>
<div style="position:absolute;left:446px;top:526px;width:1406px;height:1px;background:#ebebeb;"></div>
<span class="t" id="t60" style="left:881px;top:480.94px;font-size:17.5px;color:#616161;letter-spacing:0.007px;">March 26</span>
<span class="t" id="t61" style="left:1043px;top:480.94px;font-size:17.5px;color:#616161;letter-spacing:-0.186px;">Prabhu Prabhu</span>
<span class="t" id="t62" style="left:1206px;top:480.94px;font-size:17.5px;color:#616161;letter-spacing:-0.797px;">16.7 KB</span>
<span class="t" id="t63" style="left:1394px;top:480.94px;font-size:17.5px;color:#616161;letter-spacing:-0.328px;">Private</span>
<svg style="position:absolute;left:452px;top:538.55px;" width="34" height="36" viewBox="0 0 34 36" fill="none"><path d="M9 .800h15.400l8.800 8.400v24.500c0 .8-.7 1.500-1.500 1.500H9c-.8 0-1.500-.7-1.500-1.500V2.300c0-.8.700-1.500 1.500-1.500Z" fill="#fff" stroke="#bcbcbc" stroke-width="1.200"/><path d="M24.400 1v6.500c0 .9.700 1.600 1.600 1.600h7" fill="#f6f6f6" stroke="#bcbcbc" stroke-width="1.200" stroke-linejoin="round"/><rect x="0" y="10" width="18.800" height="19" rx="1.500" fill="#1c5cc4"/><path d="M4.400 15.400l2.200 8.600 2.700-8.600h.3l2.700 8.600 2.200-8.600" stroke="#fff" stroke-width="1.800" fill="none" stroke-linejoin="bevel"/><path d="M20.200 15.700h10.200" stroke="#8db3f0" stroke-width="1.300"/><path d="M20.200 18.300h10.200" stroke="#3f63c4" stroke-width="1.300"/><path d="M20.200 20.900h10.200" stroke="#6e92e2" stroke-width="1.300"/><path d="M20.200 23.400h10.200" stroke="#2e52b2" stroke-width="1.300"/></svg>
<span class="t" id="t64" style="left:506px;top:541.94px;font-size:17.5px;color:#242424;letter-spacing:-0.003px;">Shopping Mall Design.docx</span>
<div style="position:absolute;left:446px;top:587px;width:1406px;height:1px;background:#ebebeb;"></div>
<span class="t" id="t65" style="left:881px;top:541.94px;font-size:17.5px;color:#616161;letter-spacing:0.007px;">March 26</span>
<span class="t" id="t66" style="left:1043px;top:541.94px;font-size:17.5px;color:#616161;letter-spacing:-0.186px;">Prabhu Prabhu</span>
<span class="t" id="t67" style="left:1206px;top:541.94px;font-size:17.5px;color:#616161;letter-spacing:-0.797px;">7.49 KB</span>
<span class="t" id="t68" style="left:1394px;top:541.94px;font-size:17.5px;color:#616161;letter-spacing:-0.328px;">Private</span>
<svg style="position:absolute;left:452px;top:599.8px;" width="34" height="36" viewBox="0 0 34 36" fill="none"><path d="M9 .800h15.400l8.800 8.400v24.500c0 .8-.7 1.500-1.500 1.500H9c-.8 0-1.500-.7-1.500-1.500V2.300c0-.8.700-1.500 1.500-1.500Z" fill="#fff" stroke="#bcbcbc" stroke-width="1.200"/><path d="M24.400 1v6.500c0 .9.700 1.600 1.600 1.600h7" fill="#f6f6f6" stroke="#bcbcbc" stroke-width="1.200" stroke-linejoin="round"/><rect x="0" y="10" width="18.800" height="19" rx="1.500" fill="#1c5cc4"/><path d="M4.400 15.400l2.200 8.600 2.700-8.600h.3l2.700 8.600 2.200-8.600" stroke="#fff" stroke-width="1.800" fill="none" stroke-linejoin="bevel"/><path d="M20.200 15.700h10.200" stroke="#8db3f0" stroke-width="1.300"/><path d="M20.200 18.300h10.200" stroke="#3f63c4" stroke-width="1.300"/><path d="M20.200 20.900h10.200" stroke="#6e92e2" stroke-width="1.300"/><path d="M20.200 23.400h10.200" stroke="#2e52b2" stroke-width="1.300"/></svg>
<span class="t" id="t69" style="left:506px;top:602.94px;font-size:17.5px;color:#242424;letter-spacing:-0.370px;">Social_Media_Policy.docx</span>
<div style="position:absolute;left:446px;top:648px;width:1406px;height:1px;background:#ebebeb;"></div>
<span class="t" id="t70" style="left:881px;top:602.94px;font-size:17.5px;color:#616161;letter-spacing:0.007px;">March 26</span>
<span class="t" id="t71" style="left:1043px;top:602.94px;font-size:17.5px;color:#616161;letter-spacing:-0.186px;">Prabhu Prabhu</span>
<span class="t" id="t72" style="left:1206px;top:602.94px;font-size:17.5px;color:#616161;letter-spacing:-0.797px;">7.51 KB</span>
<span class="t" id="t73" style="left:1394px;top:602.94px;font-size:17.5px;color:#616161;letter-spacing:-0.328px;">Private</span>
<svg style="position:absolute;left:452px;top:661.05px;" width="34" height="36" viewBox="0 0 34 36" fill="none"><path d="M9 .800h15.400l8.800 8.400v24.500c0 .8-.7 1.500-1.500 1.500H9c-.8 0-1.500-.7-1.500-1.500V2.300c0-.8.700-1.500 1.500-1.500Z" fill="#fff" stroke="#bcbcbc" stroke-width="1.200"/><path d="M24.400 1v6.500c0 .9.700 1.600 1.600 1.600h7" fill="#f6f6f6" stroke="#bcbcbc" stroke-width="1.200" stroke-linejoin="round"/><rect x="0" y="10" width="18.800" height="19" rx="1.500" fill="#1c5cc4"/><path d="M4.400 15.400l2.200 8.600 2.700-8.600h.3l2.700 8.600 2.200-8.600" stroke="#fff" stroke-width="1.800" fill="none" stroke-linejoin="bevel"/><path d="M20.200 15.700h10.200" stroke="#8db3f0" stroke-width="1.300"/><path d="M20.200 18.300h10.200" stroke="#3f63c4" stroke-width="1.300"/><path d="M20.200 20.900h10.200" stroke="#6e92e2" stroke-width="1.300"/><path d="M20.200 23.400h10.200" stroke="#2e52b2" stroke-width="1.300"/></svg>
<span class="t" id="t74" style="left:506px;top:664.94px;font-size:17.5px;color:#242424;letter-spacing:-0.086px;">Sports Stadium Blueprint.docx</span>
<div style="position:absolute;left:446px;top:709px;width:1406px;height:1px;background:#ebebeb;"></div>
<span class="t" id="t75" style="left:881px;top:664.94px;font-size:17.5px;color:#616161;letter-spacing:0.007px;">March 26</span>
<span class="t" id="t76" style="left:1043px;top:664.94px;font-size:17.5px;color:#616161;letter-spacing:-0.186px;">Prabhu Prabhu</span>
<span class="t" id="t77" style="left:1206px;top:664.94px;font-size:17.5px;color:#616161;letter-spacing:-0.797px;">7.48 KB</span>
<span class="t" id="t78" style="left:1394px;top:664.94px;font-size:17.5px;color:#616161;letter-spacing:-0.328px;">Private</span>
<svg style="position:absolute;left:452px;top:722.3px;" width="34" height="36" viewBox="0 0 34 36" fill="none"><path d="M9 .800h15.400l8.800 8.400v24.500c0 .8-.7 1.500-1.500 1.500H9c-.8 0-1.500-.7-1.500-1.500V2.300c0-.8.700-1.500 1.500-1.500Z" fill="#fff" stroke="#bcbcbc" stroke-width="1.200"/><path d="M24.400 1v6.500c0 .9.700 1.600 1.600 1.600h7" fill="#f6f6f6" stroke="#bcbcbc" stroke-width="1.200" stroke-linejoin="round"/><rect x="0" y="10" width="18.800" height="19" rx="1.500" fill="#1c5cc4"/><path d="M4.400 15.400l2.200 8.600 2.700-8.600h.3l2.700 8.600 2.200-8.600" stroke="#fff" stroke-width="1.800" fill="none" stroke-linejoin="bevel"/><path d="M20.200 15.700h10.200" stroke="#8db3f0" stroke-width="1.300"/><path d="M20.200 18.300h10.200" stroke="#3f63c4" stroke-width="1.300"/><path d="M20.200 20.900h10.200" stroke="#6e92e2" stroke-width="1.300"/><path d="M20.200 23.400h10.200" stroke="#2e52b2" stroke-width="1.300"/></svg>
<span class="t" id="t79" style="left:506px;top:725.94px;font-size:17.5px;color:#242424;letter-spacing:-0.100px;">Story Assignment.docx</span>
<div style="position:absolute;left:446px;top:771px;width:1406px;height:1px;background:#ebebeb;"></div>
<span class="t" id="t80" style="left:881px;top:725.94px;font-size:17.5px;color:#616161;letter-spacing:-0.115px;">April 17, 2024</span>
<span class="t" id="t81" style="left:1043px;top:725.94px;font-size:17.5px;color:#616161;letter-spacing:-0.186px;">Prabhu Prabhu</span>
<span class="t" id="t82" style="left:1206px;top:725.94px;font-size:17.5px;color:#616161;letter-spacing:-0.797px;">20.6 KB</span>
<span class="t" id="t83" style="left:1394px;top:725.94px;font-size:17.5px;color:#616161;letter-spacing:-0.328px;">Private</span>
<svg style="position:absolute;left:452px;top:783.55px;" width="34" height="36" viewBox="0 0 34 36" fill="none"><path d="M9 .800h15.400l8.800 8.400v24.500c0 .8-.7 1.500-1.500 1.500H9c-.8 0-1.500-.7-1.500-1.500V2.300c0-.8.700-1.500 1.500-1.500Z" fill="#fff" stroke="#bcbcbc" stroke-width="1.200"/><path d="M24.400 1v6.500c0 .9.700 1.600 1.600 1.600h7" fill="#f6f6f6" stroke="#bcbcbc" stroke-width="1.200" stroke-linejoin="round"/><rect x="0" y="10" width="18.800" height="19" rx="1.500" fill="#1c5cc4"/><path d="M4.400 15.400l2.200 8.600 2.700-8.600h.3l2.700 8.600 2.200-8.600" stroke="#fff" stroke-width="1.800" fill="none" stroke-linejoin="bevel"/><path d="M20.200 15.700h10.200" stroke="#8db3f0" stroke-width="1.300"/><path d="M20.200 18.300h10.200" stroke="#3f63c4" stroke-width="1.300"/><path d="M20.200 20.900h10.200" stroke="#6e92e2" stroke-width="1.300"/><path d="M20.200 23.400h10.200" stroke="#2e52b2" stroke-width="1.300"/></svg>
<span class="t" id="t84" style="left:506px;top:786.94px;font-size:17.5px;color:#242424;letter-spacing:-0.452px;">Story_analysis.docx</span>
<div style="position:absolute;left:446px;top:832px;width:1406px;height:1px;background:#ebebeb;"></div>
<span class="t" id="t85" style="left:881px;top:786.94px;font-size:17.5px;color:#616161;letter-spacing:-0.231px;">May 7, 2024</span>
<span class="t" id="t86" style="left:1043px;top:786.94px;font-size:17.5px;color:#616161;letter-spacing:-0.087px;">SharePoint App</span>
<span class="t" id="t87" style="left:1206px;top:786.94px;font-size:17.5px;color:#616161;letter-spacing:-0.797px;">7.03 KB</span>
<span class="t" id="t88" style="left:1394px;top:786.94px;font-size:17.5px;color:#616161;letter-spacing:-0.328px;">Private</span>
<svg style="position:absolute;left:452px;top:844.8px;" width="34" height="36" viewBox="0 0 34 36" fill="none"><path d="M9 .800h15.400l8.800 8.400v24.500c0 .8-.7 1.500-1.500 1.500H9c-.8 0-1.500-.7-1.500-1.500V2.300c0-.8.700-1.500 1.500-1.500Z" fill="#fff" stroke="#bcbcbc" stroke-width="1.200"/><path d="M24.400 1v6.500c0 .9.700 1.600 1.600 1.600h7" fill="#f6f6f6" stroke="#bcbcbc" stroke-width="1.200" stroke-linejoin="round"/><rect x="0" y="10" width="18.800" height="19" rx="1.500" fill="#1c5cc4"/><path d="M4.400 15.400l2.200 8.600 2.700-8.600h.3l2.700 8.600 2.200-8.600" stroke="#fff" stroke-width="1.800" fill="none" stroke-linejoin="bevel"/><path d="M20.200 15.700h10.200" stroke="#8db3f0" stroke-width="1.300"/><path d="M20.200 18.300h10.200" stroke="#3f63c4" stroke-width="1.300"/><path d="M20.200 20.900h10.200" stroke="#6e92e2" stroke-width="1.300"/><path d="M20.200 23.400h10.200" stroke="#2e52b2" stroke-width="1.300"/></svg>
<span class="t" id="t89" style="left:506px;top:847.94px;font-size:17.5px;color:#242424;letter-spacing:-0.336px;">Strategic_Partnership_Proposal.docx</span>
<span class="t" id="t90" style="left:881px;top:847.94px;font-size:17.5px;color:#616161;letter-spacing:0.007px;">March 26</span>
<span class="t" id="t91" style="left:1043px;top:847.94px;font-size:17.5px;color:#616161;letter-spacing:-0.186px;">Prabhu Prabhu</span>
<span class="t" id="t92" style="left:1206px;top:847.94px;font-size:17.5px;color:#616161;letter-spacing:-0.797px;">7.48 KB</span>
<span class="t" id="t93" style="left:1394px;top:847.94px;font-size:17.5px;color:#616161;letter-spacing:-0.328px;">Private</span>
<svg style="position:absolute;left:0;top:0;overflow:visible" width="1" height="1"><g transform="translate(785.81 237.33) scale(1.2321 1.1848)"><path d="M12 2.700 17.500 7.500 12 12.300V9.800c-2.700 0-4.400.8-5.700 2.600.4-3.700 2.400-6.500 5.700-6.900V2.700Z" stroke="#424242" stroke-width="1.25" vector-effect="non-scaling-stroke" fill="none" stroke-linecap="round" stroke-linejoin="round"/><path d="M8.500 4H6c-1.400 0-2.500 1.100-2.500 2.500v7.500c0 1.400 1.100 2.500 2.500 2.500h7.500c1.400 0 2.500-1.100 2.500-2.500v-1.200" stroke="#424242" stroke-width="1.25" vector-effect="non-scaling-stroke" fill="none" stroke-linecap="round" stroke-linejoin="round"/></g></svg>
<svg style="position:absolute;left:0;top:0;overflow:visible" width="1" height="1"><g transform="translate(826.32 237.39) scale(1.2333 1.2222)"><path d="M10 2.300l2.300 4.800 5.200.7-3.800 3.700.9 5.200L10 14.200l-4.600 2.500.9-5.200L2.500 7.800l5.200-.7L10 2.300Z" stroke="#424242" stroke-width="1.2" vector-effect="non-scaling-stroke" fill="none" stroke-linecap="round" stroke-linejoin="round"/></g></svg>
<div style="position:absolute;left:768px;top:251px;width:299.800px;height:290.500px;border-radius:10px;background:#fff;box-shadow:0 0 2px rgba(0,0,0,.12),0 7px 16px rgba(0,0,0,.13);"></div>
<div style="position:absolute;left:774px;top:346px;width:288px;height:45px;background:#f5f5f5;border-radius:5px;"></div>
<svg style="position:absolute;left:0;top:0;overflow:visible" width="1" height="1"><g transform="translate(781.03 266.20) scale(1.1520 1.2032)"><path d="M2.600 4.600h14.800M7.600 4.400c0-1.300 1.100-2.300 2.400-2.300s2.400 1 2.400 2.300M4.200 4.800l1.100 11.100c.1 1 .9 1.700 1.900 1.700h5.600c1 0 1.800-.7 1.900-1.700l1.100-11.100M8.400 8.200v5.600M11.600 8.200v5.600" stroke="#424242" stroke-width="1.25" vector-effect="non-scaling-stroke" fill="none" stroke-linecap="round" stroke-linejoin="round"/></g></svg>
<span class="t" id="t94" style="left:813.6px;top:265.00px;font-size:17.5px;color:#424242;letter-spacing:-0.379px;">Delete</span>
<svg style="position:absolute;left:0;top:0;overflow:visible" width="1" height="1"><g transform="translate(780.25 311.65) scale(1.2300 1.2049)"><path d="M10 2.300l2.300 4.800 5.200.7-3.800 3.700.9 5.200L10 14.200l-4.600 2.500.9-5.200L2.500 7.800l5.200-.7L10 2.300Z" stroke="#424242" stroke-width="1.25" vector-effect="non-scaling-stroke" fill="none" stroke-linecap="round" stroke-linejoin="round"/></g></svg>
<span class="t" id="t95" style="left:813.6px;top:310.00px;font-size:17.5px;color:#424242;letter-spacing:-0.474px;">Favorite</span>
<svg style="position:absolute;left:0;top:0;overflow:visible" width="1" height="1"><g transform="translate(780.34 355.31) scale(1.1713 1.2736)"><path d="M10 2.600v11.200M5.400 9.400l4.600 4.600 4.600-4.600M4.600 17.400h10.800" stroke="#2a67b8" stroke-width="1.25" vector-effect="non-scaling-stroke" fill="none" stroke-linecap="round" stroke-linejoin="round"/></g></svg>
<span class="t" id="t96" style="left:813.3px;top:355.00px;font-size:17.5px;color:#242424;letter-spacing:-0.047px;">Download</span>
<svg style="position:absolute;left:0;top:0;overflow:visible" width="1" height="1"><g transform="translate(779.91 401.55) scale(1.1981 1.0929)"><path d="M8.300 16.500H4.600c-1.100 0-2-.9-2-2V5c0-1.100.9-2 2-2h2.500c.5 0 1 .2 1.400.6l1.400 1.400h5.500c1.100 0 2 .9 2 2v1.300M2.600 7.200h4.900c.5 0 1-.2 1.400-.6l1.300-1.300" stroke="#424242" stroke-width="1.25" vector-effect="non-scaling-stroke" fill="none" stroke-linecap="round" stroke-linejoin="round"/><circle cx="14.200" cy="14.300" r="4.300" fill="#1b1b1b"/><path d="M12.100 14.300h4M14.600 12.600l1.700 1.700-1.700 1.700" stroke="#fff" stroke-width="1.200" vector-effect="non-scaling-stroke" fill="none" stroke-linecap="round" stroke-linejoin="round"/></g></svg>
<span class="t" id="t97" style="left:813.6px;top:400.00px;font-size:17.5px;color:#424242;letter-spacing:0.192px;">Move to</span>
<svg style="position:absolute;left:0;top:0;overflow:visible" width="1" height="1"><g transform="translate(779.47 446.65) scale(1.2731 1.1893)"><rect x="8.300" y="2.500" width="8.200" height="10.200" rx="2" stroke="#424242" stroke-width="1.25" vector-effect="non-scaling-stroke" fill="none" stroke-linecap="round" stroke-linejoin="round"/><path d="M6 5.700c-1.400.2-2.500 1.100-2.500 2.700v4.800c0 1.900 1.500 3.300 3.300 3.300h2.800c1.500 0 2.400-.9 2.700-2.100" stroke="#424242" stroke-width="1.25" vector-effect="non-scaling-stroke" fill="none" stroke-linecap="round" stroke-linejoin="round"/></g></svg>
<span class="t" id="t98" style="left:813px;top:445.30px;font-size:17.5px;color:#424242;letter-spacing:-0.019px;">Copy to</span>
<div style="position:absolute;left:772.5px;top:485.7px;width:291.5px;height:1.2px;background:#e9e9e9;"></div>
<svg style="position:absolute;left:0;top:0;overflow:visible" width="1" height="1"><g transform="translate(779.92 500.95) scale(1.2433 1.3045)"><rect x="2.500" y="4.500" width="15" height="11" rx="2.200" stroke="#424242" stroke-width="1.25" vector-effect="non-scaling-stroke" fill="none" stroke-linecap="round" stroke-linejoin="round"/><path d="M12.500 4.500v11M10 10H5M7 7.900 4.900 10 7 12.100" stroke="#424242" stroke-width="1.25" vector-effect="non-scaling-stroke" fill="none" stroke-linecap="round" stroke-linejoin="round"/></g></svg>
<span class="t" id="t99" style="left:813.3px;top:501.30px;font-size:17.5px;color:#424242;letter-spacing:-0.333px;">Details</span>
<svg style="position:absolute;left:0;top:0;overflow:visible" width="1" height="1"><rect x="781.50" y="343.60" width="131.90" height="52.60" fill="none" stroke="#fd5108" stroke-width="5"/></svg>
</body></html>
